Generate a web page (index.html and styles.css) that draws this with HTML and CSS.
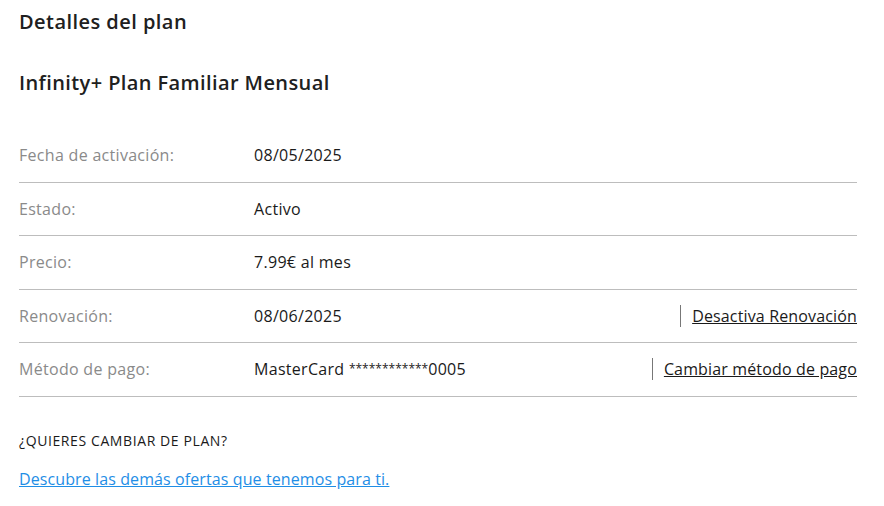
FILE: index.html
```html
<!DOCTYPE html>
<html lang="es">
<head>
    <meta charset="UTF-8">
    <meta name="viewport" content="width=device-width, initial-scale=1.0">
    <title>Detalles del plan</title>
    <link rel="stylesheet" href="styles.css">
</head>
<body>
    <main class="plan">
        <h1 class="plan-titulo">Detalles del plan</h1>
        <h2 class="plan-nombre">Infinity+ Plan Familiar Mensual</h2>

        <div class="detalles">
            <div class="fila">
                <span class="etiqueta">Fecha de activación:</span>
                <span class="valor">08/05/2025</span>
            </div>
            <div class="fila">
                <span class="etiqueta">Estado:</span>
                <span class="valor">Activo</span>
            </div>
            <div class="fila">
                <span class="etiqueta">Precio:</span>
                <span class="valor">7.99€ al mes</span>
            </div>
            <div class="fila">
                <span class="etiqueta">Renovación:</span>
                <span class="valor">08/06/2025</span>
                <a class="accion" href="#">Desactiva Renovación</a>
            </div>
            <div class="fila">
                <span class="etiqueta">Método de pago:</span>
                <span class="valor">MasterCard <span class="asteriscos">************</span>0005</span>
                <a class="accion" href="#">Cambiar método de pago</a>
            </div>
        </div>

        <p class="cambiar">¿QUIERES CAMBIAR DE PLAN?</p>
        <a class="ofertas" href="#">Descubre las demás ofertas que tenemos para ti.</a>
    </main>
</body>
</html>
```

FILE: styles.css
```css
/* Página de detalles del plan */
body {
    background-color: #ffffff;
    color: #1f1f1f;
    font-family: "Open Sans", Arial, sans-serif;
    margin: 0;
    padding: 0;
}

.plan {
    width: 838px;
    padding: 10px 19px;
}

.plan-titulo {
    font-size: 20px;
    font-weight: 600;
    letter-spacing: 0.45px;
    margin: 0;
    line-height: 24px;
    color: #202020;
}

.plan-nombre {
    font-size: 20px;
    font-weight: 600;
    letter-spacing: 0.4px;
    margin: 37px 0 0;
    line-height: 24px;
    color: #202020;
}

.detalles {
    margin-top: 34px;
}

.fila {
    display: flex;
    align-items: center;
    height: 52.5px;
    border-bottom: 1px solid #bdbdbd;
    font-size: 16px;
    letter-spacing: 0.3px;
}

.etiqueta {
    width: 235px;
    color: #8a8a8a;
}

.valor {
    flex: 1;
    color: #1a1a1a;
}

.asteriscos {
    font-size: 12px;
    letter-spacing: 0;
    vertical-align: 2px;
}

.accion {
    color: #1a1a1a;
    border-left: 1px solid #777777;
    padding: 1px 0 1px 11px;
    letter-spacing: 0.15px;
    line-height: 20px;
}

.cambiar {
    font-size: 14px;
    letter-spacing: 0.6px;
    margin: 34px 0 0;
    color: #1a1a1a;
}

.ofertas {
    display: inline-block;
    margin-top: 18px;
    font-size: 16px;
    letter-spacing: 0.1px;
    color: #1f8ee6;
}
```
